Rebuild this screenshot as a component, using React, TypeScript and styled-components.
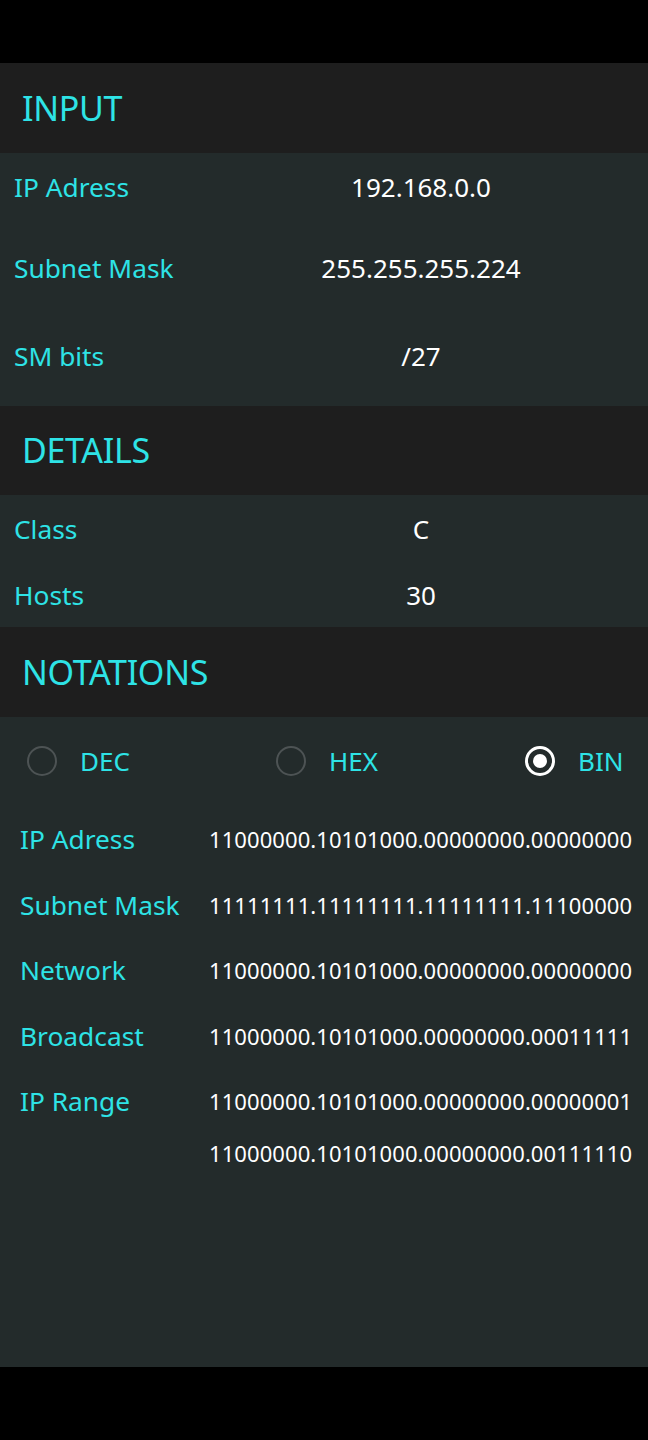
import React from "react";
import styled, { createGlobalStyle } from "styled-components";

const Global = createGlobalStyle`
  html, body { margin: 0; padding: 0; background: #000; }
  body { font-family: "Noto Sans", "Open Sans", sans-serif; }
`;

const Screen = styled.div`
  width: 648px;
  min-height: 1440px;
  display: flex;
  flex-direction: column;
  background: #000;
`;

const StatusBar = styled.div`
  height: 63px;
  background: #000;
`;

const NavBar = styled.div`
  height: 73px;
  background: #000;
`;

const Main = styled.main`
  flex: 1;
  display: flex;
  flex-direction: column;
  background: #232b2b;
`;

const Header = styled.div`
  height: 89.5px;
  background: #1e1e1e;
  display: flex;
  align-items: center;
  padding-left: 22px;
  color: #2ee3e6;
  font-size: 34px;
  letter-spacing: -0.3px;
`;

const Section = styled.section<{ $pad?: number }>`
  display: flex;
  flex-direction: column;
  padding-bottom: ${(p) => p.$pad ?? 0}px;
`;

const Row = styled.div<{ $h: number }>`
  height: ${(p) => p.$h}px;
  display: flex;
  align-items: center;
  padding-left: 14px;
`;

const Label = styled.div`
  width: 180px;
  flex: none;
  color: #2ee3e6;
  font-size: 26.3px;
`;

const Value = styled.div`
  flex: 1;
  text-align: center;
  color: #ffffff;
  font-size: 26px;
`;

const RadioRow = styled.div`
  height: 86px;
  display: flex;
  align-items: center;
  padding-left: 27px;
  padding-top: 2px;
  box-sizing: border-box;
`;

const RadioItem = styled.div<{ $w: number }>`
  width: ${(p) => p.$w}px;
  display: flex;
  align-items: center;
  gap: 23px;
`;

const RadioCircle = styled.span<{ $checked?: boolean }>`
  width: 30px;
  height: 30px;
  box-sizing: border-box;
  border-radius: 50%;
  border: ${(p) => (p.$checked ? "3px solid #ffffff" : "2px solid #4d5354")};
  display: flex;
  align-items: center;
  justify-content: center;
  &::after {
    content: "";
    display: ${(p) => (p.$checked ? "block" : "none")};
    width: 14px;
    height: 14px;
    border-radius: 50%;
    background: #ffffff;
  }
`;

const RadioText = styled.span`
  color: #2ee3e6;
  font-size: 26px;
`;

const BinList = styled.div`
  display: flex;
  flex-direction: column;
  padding-top: 4px;
`;

const BinRow = styled.div`
  display: flex;
  align-items: flex-start;
  padding-left: 20px;
`;

const BinLabel = styled.div`
  width: 189px;
  flex: none;
  height: 65.5px;
  display: flex;
  align-items: center;
  color: #2ee3e6;
  font-size: 26.3px;
`;

const BinValues = styled.div`
  display: flex;
  flex-direction: column;
`;

const BinValue = styled.div<{ $h: number }>`
  height: ${(p) => p.$h}px;
  display: flex;
  align-items: center;
  color: #ffffff;
  font-size: 22px;
  letter-spacing: 0.08px;
`;

const inputRows = [
  { label: "IP Adress", value: "192.168.0.0", h: 68 },
  { label: "Subnet Mask", value: "255.255.255.224", h: 94 },
  { label: "SM bits", value: "/27", h: 82 },
];

const detailRows = [
  { label: "Class", value: "C", h: 68 },
  { label: "Hosts", value: "30", h: 64 },
];

const binRows: { label: string; values: string[] }[] = [
  { label: "IP Adress", values: ["11000000.10101000.00000000.00000000"] },
  { label: "Subnet Mask", values: ["11111111.11111111.11111111.11100000"] },
  { label: "Network", values: ["11000000.10101000.00000000.00000000"] },
  { label: "Broadcast", values: ["11000000.10101000.00000000.00011111"] },
  {
    label: "IP Range",
    values: [
      "11000000.10101000.00000000.00000001",
      "11000000.10101000.00000000.00111110",
    ],
  },
];

export default function App() {
  return (
    <Screen>
      <Global />
      <StatusBar />
      <Main>
        <Header>INPUT</Header>
        <Section $pad={9}>
          {inputRows.map((r) => (
            <Row key={r.label} $h={r.h}>
              <Label>{r.label}</Label>
              <Value>{r.value}</Value>
            </Row>
          ))}
        </Section>
        <Header>DETAILS</Header>
        <Section>
          {detailRows.map((r) => (
            <Row key={r.label} $h={r.h}>
              <Label>{r.label}</Label>
              <Value>{r.value}</Value>
            </Row>
          ))}
        </Section>
        <Header>NOTATIONS</Header>
        <Section>
          <RadioRow>
            <RadioItem $w={249}>
              <RadioCircle />
              <RadioText>DEC</RadioText>
            </RadioItem>
            <RadioItem $w={249}>
              <RadioCircle />
              <RadioText>HEX</RadioText>
            </RadioItem>
            <RadioItem $w={120}>
              <RadioCircle $checked />
              <RadioText>BIN</RadioText>
            </RadioItem>
          </RadioRow>
          <BinList>
            {binRows.map((r) => (
              <BinRow key={r.label}>
                <BinLabel>{r.label}</BinLabel>
                <BinValues>
                  {r.values.map((v, i) => (
                    <BinValue key={i} $h={i === 0 ? 65.5 : 38}>
                      {v}
                    </BinValue>
                  ))}
                </BinValues>
              </BinRow>
            ))}
          </BinList>
        </Section>
      </Main>
      <NavBar />
    </Screen>
  );
}
